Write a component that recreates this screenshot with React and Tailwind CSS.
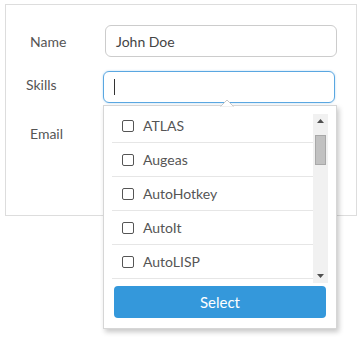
import React from "react";

const skills = ["ATLAS", "Augeas", "AutoHotkey", "AutoIt", "AutoLISP"];

const Checkbox = () => (
  <span className="inline-block w-[12px] h-[12px] border-[1.5px] border-[#555] rounded-[2px] bg-white" />
);

const Dropdown = () => {
  return (
    <div className="absolute left-0 top-[calc(100%+2px)] z-10 w-[234px] h-[224px] bg-white border border-[#d6d6d6] shadow-[2px_3px_5px_rgba(0,0,0,0.22)] pt-[8px] px-[8px]">
      <svg
        className="absolute left-[116px] top-[-7px]"
        width="14"
        height="8"
        viewBox="0 0 14 8"
      >
        <polygon points="0,8 7,1 14,8" fill="white" stroke="#c8c8c8" strokeWidth="1" />
        <rect x="0" y="7.5" width="14" height="1" fill="white" />
      </svg>

      <div className="flex h-[169px]">
        <div className="flex-1 overflow-hidden">
          <div className="-mt-[5px]">
            {skills.map((s) => (
              <div
                key={s}
                className="flex items-center gap-[9px] h-[34px] pl-[10px] border-b border-[#e6e6e6] text-[14px] text-[#555]"
              >
                <Checkbox />
                <span>{s}</span>
              </div>
            ))}
          </div>
        </div>
        <div className="w-[15px] bg-[#f1f1f1] flex flex-col items-center">
          <svg className="mt-[5px]" width="7" height="4" viewBox="0 0 7 4">
            <polygon points="0,4 3.5,0 7,4" fill="#505050" />
          </svg>
          <div className="mt-[12px] w-[11px] h-[30px] bg-[#c1c1c1] border border-[#a8a8a8]" />
          <div className="flex-1" />
          <svg className="mb-[5px]" width="7" height="4" viewBox="0 0 7 4">
            <polygon points="0,0 3.5,4 7,0" fill="#505050" />
          </svg>
        </div>
      </div>

      <button className="mt-[3px] mx-[2px] w-[212px] h-[32px] rounded-[4px] bg-[#3498db] text-white text-[15px] leading-none">
        Select
      </button>
    </div>
  );
};

export default function App() {
  return (
    <div className="w-[362px] h-[338px] bg-white pt-[4px] pl-[5px] font-['Lato','Liberation_Sans',sans-serif]">
      <div className="w-[352px] h-[212px] border border-[#dddddd] pt-[20px]">
        <div className="flex items-center">
          <label className="w-[99px] pl-[24px] text-[14px] text-[#555]">Name</label>
          <div className="w-[232px] h-[32px] rounded-[6px] border border-[#cccccc] flex items-center pl-[10px] text-[14px] text-[#444]">
            John Doe
          </div>
        </div>

        <div className="flex items-center mt-[14px] -ml-[2px]">
          <label className="w-[99px] pl-[22px] text-[14px] text-[#555] -mt-[6px]">Skills</label>
          <div className="relative w-[232px] h-[32px]">
            <div className="w-full h-full rounded-[6px] border border-[#5aa7e1] shadow-[0_0_2px_rgba(90,167,225,0.5)] flex items-center pl-[10px]">
              <span className="inline-block w-[1px] h-[16px] bg-[#333]" />
            </div>
            <Dropdown />
          </div>
        </div>

        <div className="flex items-center mt-[14px]">
          <label className="w-[99px] pl-[24px] text-[14px] text-[#555]">Email</label>
          <div className="w-[232px] h-[32px] rounded-[6px] border border-[#cccccc]" />
        </div>
      </div>
    </div>
  );
}
